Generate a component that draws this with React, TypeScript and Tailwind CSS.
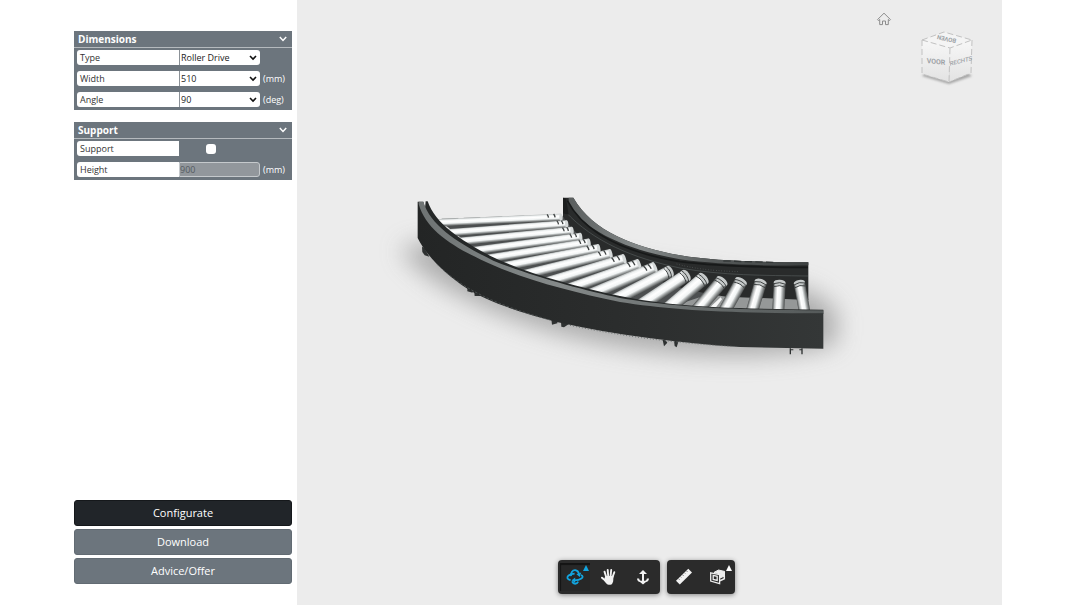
import React from 'react';

type Roller = [number, number, number, number, number, number, number];

// outer x/y, neck x/y, inner tip x/y, thickness
const rollers: Roller[] = [
  [170, 129, 500, 118, 543, 112, 22],
  [200, 159, 530, 137, 560, 132, 23],
  [236, 185, 547, 158, 576, 152, 24],
  [278, 213, 570, 179, 602, 170, 24],
  [325, 236, 597, 196, 627, 188, 25],
  [370, 260, 622, 216, 656, 205, 27],
  [425, 286, 658, 235, 692, 221, 29],
  [490, 310, 698, 250, 733, 237, 31],
  [550, 332, 745, 263, 777, 252, 32],
  [612, 352, 795, 274, 825, 262, 34],
  [685, 370, 845, 286, 870, 274, 36],
  [765, 388, 895, 297, 919, 286, 38],
  [846, 402, 950, 309, 971, 295, 40],
  [932, 414, 1010, 316, 1026, 303, 40],
  [1026, 408, 1073, 316, 1083, 304, 39],
  [1112, 408, 1137, 318, 1142, 306, 37],
  [1194, 408, 1198, 320, 1199, 308, 36],
  [1276, 408, 1261, 320, 1258, 308, 34],
];

function RollerShape({ data, index }: { data: Roller; index: number }) {
  const [x1, y1, x2, y2, x3, y3, w] = data;
  const len = Math.hypot(x3 - x1, y3 - y1);
  const ux = (x3 - x1) / len;
  const uy = (y3 - y1) / len;
  const nx = -uy;
  const ny = ux;
  const h = w / 2;
  const id = `roller-${index}`;
  const steep = index > 12;
  const late = index > 9;
  const span = late ? 20 : Math.hypot(x3 - x2, y3 - y2);
  const marks = late ? [4, 13] : [span - 2, span * 0.5];
  return (
    <g>
      <linearGradient id={id} gradientUnits="userSpaceOnUse" x1={x3 - nx * h} y1={y3 - ny * h} x2={x3 + nx * h} y2={y3 + ny * h}>
        <stop offset="0" stopColor={steep ? '#4b4e4e' : '#b4b8b8'} />
        <stop offset="0.15" stopColor={steep ? '#b3b7b7' : '#eef1f1'} />
        <stop offset="0.35" stopColor="#ffffff" />
        <stop offset="0.62" stopColor="#f1f4f4" />
        <stop offset="0.78" stopColor="#a6aaaa" />
        <stop offset="1" stopColor="#4b4e4e" />
      </linearGradient>
      <polygon
        fill={`url(#${id})`}
        points={`${x1 - nx * h},${y1 - ny * h} ${x3 - nx * h},${y3 - ny * h} ${x3 + nx * h},${y3 + ny * h} ${x1 + nx * h},${y1 + ny * h}`}
      />
      <ellipse
        cx={x3}
        cy={y3}
        rx={h}
        ry={late ? h * 0.5 : 5}
        fill={late ? '#c6caca' : '#d5d9d9'}
        transform={`rotate(${(Math.atan2(ny, nx) * 180) / Math.PI} ${x3} ${y3})`}
      />
      {marks.map((m, i) => {
        const cx = x3 - ux * m;
        const cy = y3 - uy * m;
        return (
          <path
            key={i}
            d={`M${cx - nx * h} ${cy - ny * h} Q${cx + ux * 8} ${cy + uy * 8} ${cx + nx * h} ${cy + ny * h}`}
            fill="none"
            stroke="#3f4343"
            strokeWidth={late ? 3 : 4}
            strokeDasharray={late ? 'none' : `${w * 0.5} ${w}`}
          />
        );
      })}
    </g>
  );
}

function Conveyor() {
  return (
    <svg viewBox="0 0 1440 630" className="block h-auto w-full overflow-visible" role="img" aria-label="Curved roller conveyor">
      <defs>
        <filter id="soft" x="-20%" y="-40%" width="140%" height="180%">
          <feGaussianBlur stdDeviation="36" />
        </filter>
        <linearGradient id="face" x1="0" x2="1" y1="0" y2="0">
          <stop offset="0" stopColor="#232525" />
          <stop offset="0.55" stopColor="#2c2e2e" />
          <stop offset="1" stopColor="#343737" />
        </linearGradient>
        <linearGradient id="lip" x1="0" x2="1" y1="0" y2="0">
          <stop offset="0" stopColor="#6f7474" />
          <stop offset="0.35" stopColor="#858a8a" />
          <stop offset="0.7" stopColor="#666b6b" />
          <stop offset="1" stopColor="#555a5a" />
        </linearGradient>
        <linearGradient id="innerLip" x1="0" x2="1" y1="0" y2="0">
          <stop offset="0" stopColor="#5a5e5e" />
          <stop offset="0.3" stopColor="#858a8a" />
          <stop offset="0.6" stopColor="#565a5a" />
          <stop offset="1" stopColor="#3c4040" />
        </linearGradient>
      </defs>

      <path
        d="M60 205 L180 180 L1290 330 L1370 390 L1370 490 C1200 550 800 540 500 450 C300 390 110 290 60 205Z"
        fill="#777"
        opacity="0.55"
        filter="url(#soft)"
      />

      <path d="M180 122 L545 106 C640 230 830 300 1045 340 L1000 395 L700 365 L330 245Z" fill="#4c4f50" />
      <path d="M1040 325 L1285 355 L1290 392 L860 385Z" fill="#959898" />

      <path
        d="M549 53 L580 53 C640 155 760 200 900 226 C1000 243 1130 246 1285 247 L1285 360 L1040 350 C850 325 650 250 549 112Z"
        fill="#292b2b"
      />
      <path
        d="M566 53 L580 53 C640 155 760 200 900 226 C1000 243 1130 246 1285 247 L1285 256 C1130 258 1000 252 900 238 C750 211 615 158 566 70Z"
        fill="url(#innerLip)"
      />
      <path d="M562 62 C620 172 760 222 900 245 C1020 260 1140 262 1284 262" fill="none" stroke="#171919" strokeWidth="5" />
      <path d="M556 95 C640 185 760 235 900 264 C1030 287 1150 286 1284 288" fill="none" stroke="#555b5b" strokeWidth="2" />
      <path d="M890 252 C950 268 1010 273 1080 275" fill="none" stroke="#656a6a" strokeWidth="2" strokeDasharray="2 6" />
      <path d="M549 53 L558 56 L566 104 L549 100Z" fill="#1b1d1d" />
      <path d="M1030 243 L1180 247" stroke="#343838" strokeWidth="4" strokeDasharray="22 10" />

      <path d="M185 117 L498 106" stroke="#9da1a1" strokeWidth="3" strokeDasharray="50 16" />
      {rollers.map((r, i) => (
        <RollerShape key={i} data={r} index={i} />
      ))}
      <path d="M990 382 L1022 352 L1026 358 L1008 382Z" fill="#f5f6f6" />

      <g fill="#2e3131">
        <path d="M126 200 L133 204 L148 230 L134 226 L127 216Z" />
        <path d="M262 320 L276 325 L278 338 L262 334Z M282 330 L302 338 V348 H284Z" />
        <path d="M514 417 L532 422 V430 L516 434Z M543 425 L570 430 L552 442 L544 440Z" />
        <path d="M848 480 H856 L862 488 L852 499Z M882 482 H896 L890 502 L884 498Z" />
        <path d="M1229 505 H1233 V523 H1229Z M1264 505 H1268 V523 H1264Z M1229 508 H1240 V511 H1229Z M1258 508 H1268 V511 H1258Z" />
      </g>

      <path
        d="M137 64 L143 64 C165 130 240 180 330 227 C430 276 570 316 720 348 C850 375 1000 387 1330 389 L1330 402 L1060 402 L700 370 L400 300 C270 250 160 180 134 95Z"
        fill="#252828"
      />
      <path
        d="M113 65 L130 65 C150 150 250 200 340 247 C450 293 610 337 720 360 C870 386 1050 398 1330 400 L1330 506 L1080 501 C900 490 700 464 530 426 C430 400 320 365 260 325 C200 285 140 230 113 174Z"
        fill="url(#face)"
      />
      <path
        d="M116 65 L130 65 C152 140 245 195 340 242 C450 287 610 331 720 354 C870 380 1050 390 1330 391 L1330 400 C1050 400 870 390 720 366 C580 338 440 300 340 256 C225 205 140 155 116 72Z"
        fill="url(#lip)"
      />
      <path d="M570 436 C740 472 900 490 1070 500" fill="none" stroke="#6d7272" strokeWidth="3" strokeDasharray="3 6" />
      <path d="M170 252 C250 330 350 375 510 420" fill="none" stroke="#5b6060" strokeWidth="2" strokeDasharray="8 5" />
    </svg>
  );
}

function ViewCube() {
  return (
    <svg width="60" height="62" viewBox="0 0 60 62" role="img" aria-label="View cube">
      <defs>
        <filter id="cubeShadow" x="-20%" y="-50%" width="140%" height="200%">
          <feGaussianBlur stdDeviation="1.2" />
        </filter>
        <linearGradient id="cubeFace" x1="0" x2="0" y1="0" y2="1">
          <stop offset="0" stopColor="#f7f7f7" />
          <stop offset="1" stopColor="#e3e3e3" />
        </linearGradient>
      </defs>
      <path d="M6 50 L33 58 L56 50 L50 46 L10 46Z" fill="#909090" opacity="0.75" filter="url(#cubeShadow)" />
      <path d="M6 14 L28 6 L56 14 L34 22Z" fill="#f4f4f4" />
      <path d="M6 14 L34 22 L33 56 L6 48Z" fill="url(#cubeFace)" />
      <path d="M34 22 L56 14 L55 47 L33 56Z" fill="url(#cubeFace)" />
      <path d="M6 14 L28 6 L56 14 L34 22Z M6 14 V48 L33 56 L34 22 M56 14 L55 47 L33 56" fill="none" stroke="#c2c2c2" strokeDasharray="6 3" />
      <g fill="#9da2a6" fontFamily="Roboto, sans-serif" fontWeight="700" textAnchor="middle">
        <text fontSize="7" transform="translate(20 38) skewY(6)">VOOR</text>
        <text fontSize="6" fontWeight="500" transform="translate(45 37) skewY(-14)">RECHTS</text>
        <text fontSize="6" transform="translate(31 11) rotate(192)">BOVEN</text>
      </g>
    </svg>
  );
}

function HomeIcon() {
  return (
    <svg width="16" height="14" viewBox="0 0 16 14" fill="none" stroke="#8c8c8c" strokeLinejoin="round">
      <path d="M8 1.2 L1.5 7.6 L2.4 8.5 L3.7 7.5 V12.6 H6.5 V9 H9.5 V12.6 H12.3 V7.5 L13.6 8.5 L14.5 7.6Z" />
    </svg>
  );
}

function OrbitIcon() {
  return (
    <svg width="18" height="18" viewBox="0 0 18 18" fill="none" stroke="#12a5e0" strokeWidth="1.8">
      <path d="M5 8.2 C4.6 4.6 6.6 2 9.2 2.2 C11.2 2.4 12.6 4 13 6" />
      <path d="M8.6 5.7 C4.2 6 1 7.8 1.4 9.8 C1.6 11 3 11.7 4.6 12" />
      <path d="M15 7 C17 7.8 17.2 9.4 15.4 10.6 C13.6 11.8 11 12.3 8.4 12.3" />
      <path d="M6 13.4 C7.4 16.6 10.8 16.4 12.2 13.6" />
      <path d="M10.4 6.2 L15.2 4.6 L13.8 9Z M9.2 9.6 V15 L5.6 12.3Z" fill="#12a5e0" stroke="none" />
    </svg>
  );
}

function HandIcon() {
  return (
    <svg width="18" height="18" viewBox="0 0 18 18" fill="none" stroke="#f2f2f2" strokeLinecap="round">
      <path d="M6.2 9 L4.5 3.6 M8.2 8 L7.7 1.9 M10.6 8 L11.2 2 M12.6 9 L14.3 4.2" strokeWidth="1.9" />
      <path d="M5.4 12.6 L2 9.7" strokeWidth="2" />
      <path d="M5.2 8 H13.5 L13.2 13.2 C12.5 15.5 11.7 16.8 10.5 16.8 H8.5 C6.5 16.5 5 14 4 12.2Z" fill="#f2f2f2" stroke="none" />
    </svg>
  );
}

function DollyIcon() {
  return (
    <svg width="16" height="18" viewBox="0 0 16 18" fill="#f2f2f2">
      <path d="M8 2 L12 6 H9 V12.8 C11 12.6 11.6 11.8 11.9 10.4 H14 C13.8 12.8 12.6 13.8 11 14 L8 16.6 L5 14 C3.4 13.8 2.2 12.8 2 10.4 H4.1 C4.4 11.8 5 12.6 7 12.8 V6 H4Z" />
    </svg>
  );
}

function RulerIcon() {
  return (
    <svg width="18" height="18" viewBox="0 0 18 18">
      <path d="M1 12.8 L13.3 .8 L17 4.5 L4.8 16.6Z" fill="#f2f2f2" />
      <path d="M3.4 10.6 L4.6 11.8 M5.4 8.6 L6.3 9.5 M7.4 6.7 L8.6 7.9 M9.4 4.7 L10.3 5.6 M11.4 2.8 L12.6 4" stroke="#2b2b2b" strokeWidth=".6" />
    </svg>
  );
}

function SectionIcon() {
  return (
    <svg width="18" height="18" viewBox="0 0 18 18" fill="none" stroke="#ededed">
      <path d="M5 4.4 L9.5 2 L15.5 3.4 L11.5 6Z M15.5 3.4 V8 L11 10 V6" fill="#ededed" />
      <path d="M1.7 4.8 L10.6 6.6 V15.6 L1.7 13Z" strokeWidth="1.3" fill="#2b2b2b" />
      <path d="M4.2 7.4 L8.2 8.3 V12.4 L4.2 11.4Z" strokeWidth="1.3" />
      <path d="M11 12.8 L15.3 10.8 V8" strokeWidth="1.5" />
    </svg>
  );
}

function PanelHead({ children }: { children: string }) {
  return (
    <button type="button" className="flex h-[17px] w-full items-center justify-between border-b border-[#b5babe] pr-[5px] pl-1 text-[10px] leading-4 font-bold">
      {children}
      <svg width="8" height="6" viewBox="0 0 8 6" fill="none" stroke="white" strokeWidth="1.5">
        <path d="M.8 1 L4 4.4 L7.2 1" />
      </svg>
    </button>
  );
}

const label = 'flex h-[15px] w-[102px] items-center rounded-l-[3px] bg-white pl-[3px] text-[#333]';

function SelectRow({ id, name, value, unit }: { id: string; name: string; value: string; unit?: string }) {
  return (
    <div className="flex items-center">
      <label htmlFor={id} className={label}>{name}</label>
      <div className="relative">
        <select id={id} defaultValue={value} className="block h-[15px] w-[81px] appearance-none rounded-r-[3px] border-l border-[#8b9197] bg-white pl-px text-[#222]">
          <option>{value}</option>
        </select>
        <svg className="pointer-events-none absolute top-[5px] right-[3px]" width="8" height="6" viewBox="0 0 8 6" fill="none" stroke="#111" strokeWidth="1.6">
          <path d="M1 1 L4 4 L7 1" />
        </svg>
      </div>
      {unit && <span className="ml-[3px]">{unit}</span>}
    </div>
  );
}

const tool = 'relative flex h-7 w-[30px] items-center justify-center';

function Corner({ className }: { className: string }) {
  return (
    <svg className={`absolute top-[2px] right-px ${className}`} width="6" height="6" viewBox="0 0 6 6" fill="currentColor">
      <path d="M3 0 L6 6 H0Z" />
    </svg>
  );
}

export default function App() {
  return (
    <main className="flex min-h-screen bg-white pr-[68px] pl-[74px] font-['Open_Sans','Noto_Sans',sans-serif]">
      <aside className="flex w-[223px] shrink-0 flex-col justify-between pt-[31px] pr-[5px] pb-[21px]">
        <form className="flex flex-col gap-3 text-[9px] leading-[15px] text-white">
          <section className="bg-[#6c757d]">
            <PanelHead>Dimensions</PanelHead>
            <div className="flex flex-col gap-[6px] px-[3px] pt-[2px] pb-[3px]">
              <SelectRow id="type" name="Type" value="Roller Drive" />
              <SelectRow id="width" name="Width" value="510" unit="(mm)" />
              <SelectRow id="angle" name="Angle" value="90" unit="(deg)" />
            </div>
          </section>
          <section className="bg-[#6c757d]">
            <PanelHead>Support</PanelHead>
            <div className="flex flex-col gap-[6px] px-[3px] pt-[2px] pb-[3px]">
              <div className="flex items-center">
                <label htmlFor="support" className={label}>Support</label>
                <input id="support" type="checkbox" className="ml-[27px] size-[10px] appearance-none rounded-[3px] bg-white" />
              </div>
              <div className="flex items-center">
                <label htmlFor="height" className={label}>Height</label>
                <input id="height" type="text" disabled defaultValue="900" className="h-[15px] w-[81px] rounded-r-[3px] border border-[#c5c9cc] bg-[#92979c] text-[#555b61]" />
                <span className="ml-[3px]">(mm)</span>
              </div>
            </div>
          </section>
        </form>
        <nav className="flex flex-col gap-[3px] text-[11px] text-white">
          <button type="button" className="h-[26px] rounded-[3px] border border-[#15181b] bg-[#212529]">Configurate</button>
          <button type="button" className="h-[26px] rounded-[3px] border border-[#626b73] bg-[#6c757d]">Download</button>
          <button type="button" className="h-[26px] rounded-[3px] border border-[#626b73] bg-[#6c757d]">Advice/Offer</button>
        </nav>
      </aside>

      <section className="flex min-w-0 flex-1 flex-col overflow-hidden bg-[#ececec]">
        <div className="flex items-start justify-end gap-6 pt-3 pr-[26px]">
          <button type="button" aria-label="Home view"><HomeIcon /></button>
          <div className="pt-[14px]"><ViewCube /></div>
        </div>
        <div className="pt-[92px] pr-[142px] pl-[83px]">
          <Conveyor />
        </div>
        <div className="mt-auto flex justify-center gap-[7px] pr-[6px] pb-[11px]">
          <div className="flex h-[34px] items-center gap-1 rounded-[4px] bg-[#2b2b2b] px-[2px] shadow-[0_1px_5px_rgba(0,0,0,0.45)]">
            <button type="button" aria-label="Orbit" className={`${tool} bg-[#272727] shadow-[inset_1px_2px_1px_#141414]`}>
              <OrbitIcon />
              <Corner className="text-[#12a5e0]" />
            </button>
            <button type="button" aria-label="Pan" className={tool}><HandIcon /></button>
            <button type="button" aria-label="Zoom" className={tool}><DollyIcon /></button>
          </div>
          <div className="flex h-[34px] items-center gap-1 rounded-[4px] bg-[#2b2b2b] px-[2px] shadow-[0_1px_5px_rgba(0,0,0,0.45)]">
            <button type="button" aria-label="Measure" className={tool}><RulerIcon /></button>
            <button type="button" aria-label="Section" className={tool}>
              <SectionIcon />
              <Corner className="text-white" />
            </button>
          </div>
        </div>
      </section>
    </main>
  );
}
